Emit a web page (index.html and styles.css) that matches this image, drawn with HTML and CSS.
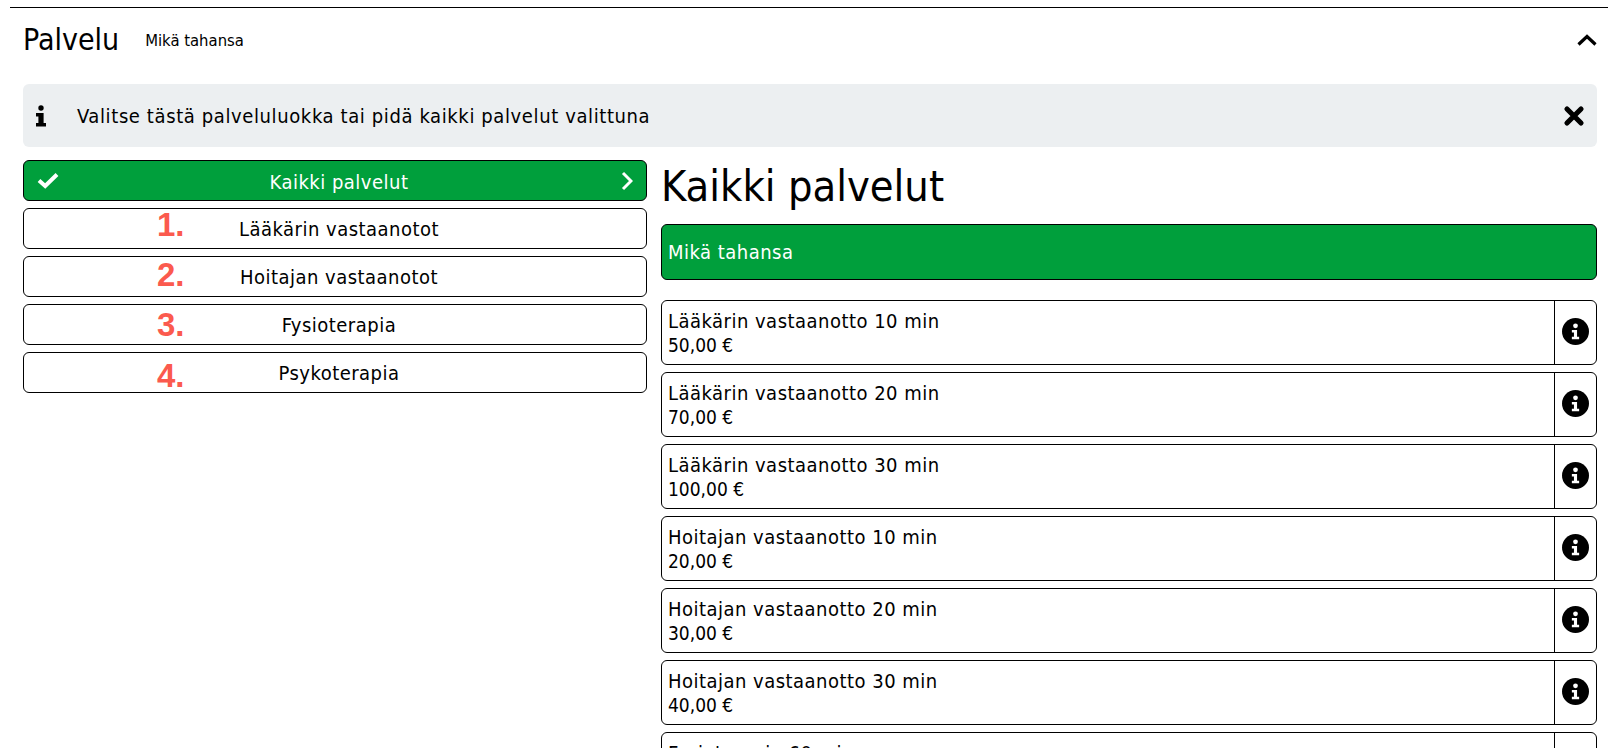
FILE: index.html
```html
<!DOCTYPE html>
<html lang="fi">
<head>
<meta charset="utf-8">
<title>Palvelu</title>
<link rel="stylesheet" href="styles.css">
</head>
<body>
<div class="page">
  <header class="head">
    <h2 class="head-title">Palvelu</h2>
    <span class="head-value">Mikä tahansa</span>
    <svg class="head-chev" viewBox="0 0 20 12" width="20" height="12"><path d="M1.500 10.500 10 2.500 18.500 10.500" fill="none" stroke="#000" stroke-width="3.200"/></svg>
  </header>
  <div class="notice">
    <svg class="notice-i" viewBox="0 0 12 22" width="12" height="22"><circle cx="6" cy="3" r="2.700"/><path d="M1 8h7.600v10H11v3.500H1V18h2.400v-6.500H1z"/></svg>
    <span class="notice-text">Valitse tästä palveluluokka tai pidä kaikki palvelut valittuna</span>
    <svg class="notice-x" viewBox="0 0 22 22" width="22" height="22"><path d="M4 4 18 18M18 4 4 18" fill="none" stroke="#000" stroke-width="5.200" stroke-linecap="round"/></svg>
  </div>
  <div class="cols">
    <nav class="cats">
      <button class="cat cat-on">
        <svg class="cat-check" viewBox="0 0 24 18" width="24" height="18"><path d="M3 9.500 9.200 15 21 3.500" fill="none" stroke="#fff" stroke-width="4"/></svg>
        Kaikki palvelut
        <svg class="cat-next" viewBox="0 0 12 20" width="12" height="20"><path d="M2 2l8 8-8 8" fill="none" stroke="#fff" stroke-width="3"/></svg>
      </button>
      <button class="cat"><span class="mark mark-1">1.</span>Lääkärin vastaanotot</button>
      <button class="cat"><span class="mark mark-2">2.</span>Hoitajan vastaanotot</button>
      <button class="cat"><span class="mark mark-3">3.</span>Fysioterapia</button>
      <button class="cat"><span class="mark mark-4">4.</span>Psykoterapia</button>
    </nav>
    <main class="services">
      <h1 class="title">Kaikki palvelut</h1>
      <div class="any">Mikä tahansa</div>
      <div class="card"><div class="card-body">Lääkärin vastaanotto 10 min<div class="price">50,00 €</div></div><div class="card-info"><svg class="info" viewBox="0 0 26 26" width="27" height="27"><use href="#i"/></svg></div></div>
      <div class="card"><div class="card-body">Lääkärin vastaanotto 20 min<div class="price">70,00 €</div></div><div class="card-info"><svg class="info" viewBox="0 0 26 26" width="27" height="27"><use href="#i"/></svg></div></div>
      <div class="card"><div class="card-body">Lääkärin vastaanotto 30 min<div class="price">100,00 €</div></div><div class="card-info"><svg class="info" viewBox="0 0 26 26" width="27" height="27"><use href="#i"/></svg></div></div>
      <div class="card"><div class="card-body">Hoitajan vastaanotto 10 min<div class="price">20,00 €</div></div><div class="card-info"><svg class="info" viewBox="0 0 26 26" width="27" height="27"><use href="#i"/></svg></div></div>
      <div class="card"><div class="card-body">Hoitajan vastaanotto 20 min<div class="price">30,00 €</div></div><div class="card-info"><svg class="info" viewBox="0 0 26 26" width="27" height="27"><use href="#i"/></svg></div></div>
      <div class="card"><div class="card-body">Hoitajan vastaanotto 30 min<div class="price">40,00 €</div></div><div class="card-info"><svg class="info" viewBox="0 0 26 26" width="27" height="27"><use href="#i"/></svg></div></div>
      <div class="card"><div class="card-body">Fysioterapia 60 min<div class="price">80,00 €</div></div><div class="card-info"><svg class="info" viewBox="0 0 26 26" width="27" height="27"><use href="#i"/></svg></div></div>
    </main>
  </div>
</div>
<svg class="defs" width="0" height="0"><defs><g id="i"><circle cx="13" cy="13" r="13" fill="#000"/><circle cx="13" cy="7.500" r="2.300" fill="#fff"/><path d="M9.500 11.500h5v6.500h2v2.500h-7V18h2v-4h-2z" fill="#fff"/></g></defs></svg>
</body>
</html>
```
FILE: styles.css
```css
html, body {
  margin: 0;
  padding: 0;
  height: 748px;
  overflow: hidden;
  background: #fff;
}
body {
  font-family: "DejaVu Sans", Verdana, sans-serif;
  font-stretch: condensed;
  color: #000;
}
.page {
  margin: 7px 0 0 10px;
  border-top: 1px solid #000;
  padding: 0 11px 0 13px;
}
.head {
  display: flex;
  align-items: center;
  box-sizing: border-box;
  height: 62px;
  padding-top: 2px;
}
.head-title {
  margin: 0;
  font-size: 30px;
  font-weight: 400;
  line-height: 60px;
}
.head-value {
  margin-left: 26px;
  font-size: 16.500px;
}
.head-chev {
  margin-left: auto;
}
.notice {
  display: flex;
  align-items: center;
  height: 63px;
  margin-top: 14px;
  padding: 0 12px;
  background: #eceff1;
  border-radius: 6px;
  font-size: 20px;
  letter-spacing: 0.610px;
}
.notice-text {
  margin-left: 30px;
}
.notice-x {
  margin-left: auto;
}
.cols {
  display: flex;
  gap: 14px;
  margin-top: 13px;
}
.cats {
  width: 624px;
  flex: none;
  display: flex;
  flex-direction: column;
  gap: 7px;
}
.cat {
  position: relative;
  display: block;
  width: 100%;
  height: 41px;
  padding: 1px 0 0 8px;
  border: 1px solid #000;
  border-radius: 6px;
  background: #fff;
  color: #000;
  font: inherit;
  font-stretch: condensed;
  font-size: 20px;
  letter-spacing: 0.480px;
  text-align: center;
}
.cat-on {
  padding-top: 2px;
  background: #009f3c;
  color: #fff;
}
.cat-check {
  position: absolute;
  left: 12px;
  top: 10px;
}
.cat-next {
  position: absolute;
  right: 13px;
  top: 10px;
}
.mark {
  position: absolute;
  left: 133px;
  font-family: "Liberation Sans", Arial, sans-serif;
  font-stretch: normal;
  font-weight: 700;
  font-size: 33px;
  line-height: 40px;
  letter-spacing: 0;
  color: #fb5a4e;
}
.mark-1 {
  top: -4px;
}
.mark-2 {
  top: -2px;
}
.mark-3 {
  top: 0;
}
.mark-4 {
  top: 3px;
}
.services {
  flex: 1;
  min-width: 0;
}
.title {
  margin: 0;
  font-size: 43px;
  font-weight: 400;
  line-height: 52px;
}
.any {
  display: flex;
  align-items: center;
  height: 56px;
  margin-top: 12px;
  padding-left: 6px;
  box-sizing: border-box;
  background: #009f3c;
  border: 1px solid #000;
  border-radius: 6px;
  color: #fff;
  font-size: 20px;
  letter-spacing: 0.480px;
}
.card {
  display: flex;
  height: 65px;
  box-sizing: border-box;
  margin-top: 7px;
  border: 1px solid #000;
  border-radius: 6px;
  font-size: 20px;
  letter-spacing: 0.480px;
  line-height: 24px;
}
.any + .card {
  margin-top: 20px;
}
.card-body {
  flex: 1;
  padding: 8px 6px 0;
}
.price {
  font-size: 19px;
  letter-spacing: 0;
}
.card-info {
  flex: none;
  width: 41px;
  display: flex;
  align-items: center;
  justify-content: center;
  padding-bottom: 2px;
  border-left: 1px solid #000;
}
.info {
  margin-right: 1px;
}
.defs {
  position: absolute;
}
```
